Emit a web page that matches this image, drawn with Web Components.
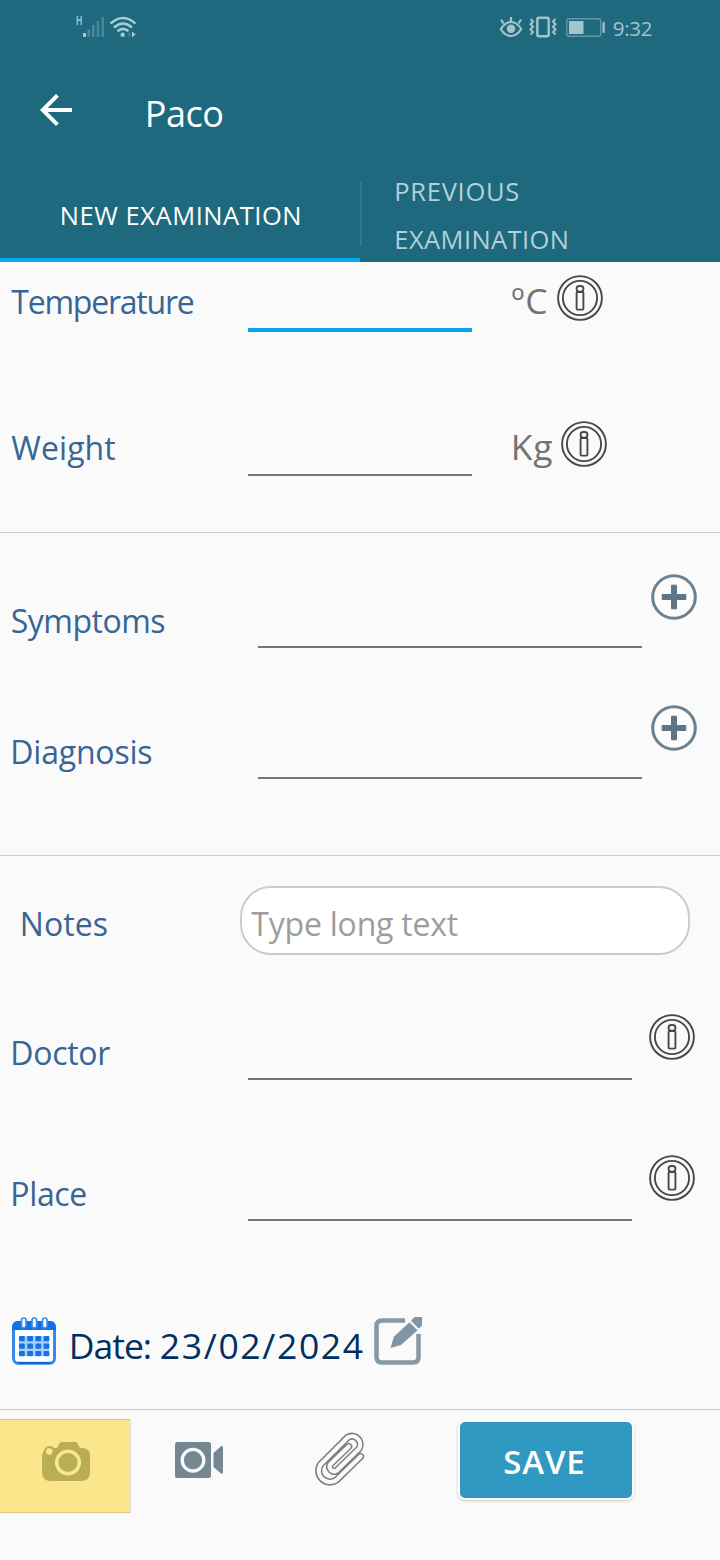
<!DOCTYPE html>
<html lang="en">
<head>
<meta charset="utf-8">
<title>Paco</title>
<style>
html,body{margin:0;padding:0}
body{width:720px;height:1560px;overflow:hidden;background:#fafafa;font-family:"Open Sans","Noto Sans",sans-serif}
</style>
</head>
<body>
<exam-app></exam-app>
<script>
const define = (name, html, Base = HTMLElement) => customElements.define(name, class extends Base {
  constructor() {
    super();
    const t = document.createElement('template');
    t.innerHTML = html;
    this.attachShadow({ mode: 'open' }).append(t.content.cloneNode(true));
  }
});

/* A single-line label tracked so that its ink spans the width given in "w". */
const pen = document.createElement('canvas').getContext('2d');
class FitText extends HTMLElement {
  connectedCallback() {
    const size = +this.getAttribute('size') || 32;
    const weight = this.getAttribute('weight') || 400;
    const text = this.textContent;
    const root = this.shadowRoot || this.attachShadow({ mode: 'open' });
    root.innerHTML = `<style>:host{display:block;white-space:nowrap;overflow:visible}</style><slot></slot>`;
    pen.font = `${weight} ${size}px "Open Sans","Noto Sans",sans-serif`;
    const m = pen.measureText(text);
    const w = +this.getAttribute('w');
    const ls = (w - 1 - m.actualBoundingBoxLeft - m.actualBoundingBoxRight) / Math.max(1, text.length - 1);
    this.style.cssText += `;font-size:${size}px;font-weight:${weight};letter-spacing:${ls.toFixed(3)}px;width:${w}px;text-indent:${(m.actualBoundingBoxLeft + .8).toFixed(2)}px`;
  }
}
customElements.define('fit-text', FitText);

define('info-icon', `<style>:host{display:block;width:46px;height:46px}svg{display:block}</style>
<svg width="46" height="46" viewBox="0 0 46 46" fill="none" stroke="#484848" stroke-width="1.9">
<circle cx="23" cy="23" r="21.900"/><circle cx="23" cy="23" r="17.100"/>
<rect x="19.600" y="11" width="6.800" height="5.700" rx="2.600"/><rect x="19.600" y="17" width="6.800" height="17.600" rx="1"/></svg>`);

define('add-icon', `<style>:host{display:block;width:46px;height:46px}svg{display:block}</style>
<svg width="46" height="46" viewBox="0 0 46 46"><circle cx="23" cy="23" r="21.300" fill="#fcfcfc" stroke="#6b8190" stroke-width="3"/>
<path d="M20.500 11.200h5v9.300h9.300v5h-9.300v9.300h-5v-9.300h-9.300v-5h9.300z" fill="#5f7585" stroke="#5f7585" stroke-width="1" stroke-linejoin="round"/></svg>`);

define('status-bar', `<style>
:host{display:flex;height:56px;box-sizing:border-box;padding:0 0 0 76px;color:#a5c3cb}
svg{display:block;flex:none}
.h{font:700 12.500px/12px "Liberation Sans",sans-serif;width:6px;margin-top:15px;transform:scaleX(.7);transform-origin:0 0}
fit-text{line-height:30px;margin-top:13px}
</style>
<span class="h">H</span>
<svg width="56" height="56" viewBox="82 0 56 56"><g fill="#4a8797"><path d="M87.500 29.500h2.600v7.500h-2.600zM92 25h2.600v12H92zM96.700 21h2.600v16h-2.600zM101.400 17h2.600v20h-2.600z"/></g><rect x="83" y="33" width="3" height="4" rx=".7" fill="#a5cdd4"/>
<g fill="none" stroke="#a5cdd4" stroke-width="2.500"><path d="M110.500 23.700q12.500-11.500 25 0M114 27.500q9-8 18 0M117.500 31.300q5.500-4.800 11 0"/></g><circle cx="122.700" cy="34.700" r="2.200" fill="#a5cdd4"/><path d="M130.300 32v5l-3.300-2.500z" fill="#4a8797"/><path d="M132 31.500l3.600 3-3.600 3z" fill="#a5cdd4"/></svg>
<svg width="475" height="56" viewBox="138 0 475 56" fill="none" stroke="#a5c3cb" stroke-width="2.200"><path d="M500.800 29q4.200-7 10.200-7t10.200 7q-4.200 7-10.200 7t-10.200-7z"/><circle cx="511" cy="28.800" r="4.300" fill="#a5c3cb" stroke="none"/><path d="M511 17v4.500M501 19.500l2.500 4M521 19.500l-2.500 4"/>
<rect x="537.300" y="17.700" width="11.400" height="18.600" rx="1.500" stroke-width="2.400"/><path d="M530.500 19l2.500 2.500-2.500 2.700 2.500 2.600-2.500 2.700 2.500 2.500-2.500 2.500M555.500 19l-2.500 2.500 2.500 2.700-2.500 2.600 2.500 2.700-2.500 2.500 2.500 2.500" stroke-width="2"/>
<rect x="566.700" y="18.700" width="34" height="17.600" rx="2.500" stroke="#5f99a8" stroke-width="1.400"/><rect x="569" y="21" width="14.500" height="13" fill="#a5c3cb" stroke="none"/><rect x="602.500" y="22" width="2.300" height="11" rx="1" fill="#a5c3cb" stroke="none"/></svg>
<fit-text size="20.500" w="39">9:32</fit-text>`);

define('app-bar', `<style>
:host{display:flex;height:110px;padding-left:32px}
svg{display:block;margin-top:30px;flex:none}
::slotted(*){margin:34px 0 0 67px;line-height:48px;color:#fff}
</style><svg width="48" height="48" viewBox="0 0 24 24" fill="#fff"><path d="M20 11H7.830l5.590-5.590L12 4l-8 8 8 8 1.410-1.410L7.830 13H20z"/></svg><slot></slot>`);

define('exam-tabs', `<style>
:host{display:grid;grid-template-columns:1fr 1fr;height:96px;line-height:48px}
.a,.b{box-sizing:border-box;height:96px}
.a{padding:25px 0 0 61px;color:#fff;border-bottom:4px solid #08a6f1}
.b{display:flex;color:#b2d0d8}
i{width:2px;height:64px;margin-top:16px;background:#34788a}
.t{padding:1px 0 0 33.500px}
</style><div class="a"><fit-text size="25.500" w="238.500">NEW EXAMINATION</fit-text></div>
<div class="b"><i></i><div class="t"><fit-text size="25.500" w="123">PREVIOUS</fit-text><fit-text size="25.500" w="171.500">EXAMINATION</fit-text></div></div>`);

/* Label on the left, underlined field in the middle, unit or action at the end. */
define('field-row', `<style>
:host{display:flex;align-items:flex-start;height:var(--h);box-sizing:border-box}
.label{width:var(--fx,248px);flex:none;box-sizing:border-box;padding:var(--ly) 0 0 var(--lx,12.500px);color:#376696;line-height:40px}
.field{width:var(--fw);flex:none;box-sizing:border-box;height:var(--uy);border-bottom:var(--bar,2px solid #757575)}
.end{display:flex;padding:var(--ey) 0 0 var(--ex);color:#737373;line-height:40px}
</style><div class="label"><slot name="label"></slot></div><div class="field"></div><div class="end"><slot></slot></div>`);

define('notes-row', `<style>
:host{display:flex;height:128px;color:#376696;line-height:40px}
.l{width:240px;box-sizing:border-box;padding:48px 0 0 22px}
.box{width:450px;height:69px;margin-top:30px;box-sizing:border-box;border:2px solid #ccc;border-radius:31px;background:#fff;color:#9d9d9d;padding:16px 0 0 8.500px}
</style><div class="l"><slot name="label"></slot></div><div class="box"><slot></slot></div>`);

define('date-row', `<style>
:host{display:flex;height:124px;padding:32px 0 0 10px;box-sizing:border-box;color:#003061}
svg{display:block;flex:none}fit-text{margin-top:10px;height:36px;line-height:36px}
</style>
<svg width="48" height="48" viewBox="0 0 48 48"><rect x="3.500" y="6" width="41" height="40.300" rx="5" fill="#fff" stroke="#3787ee" stroke-width="3"/><path d="M2 13V10q0-4 4-6h36q4 2 4 6v3z" fill="#0f70eb"/><g fill="#fafafa" stroke="#3d8bea" stroke-width="1.700"><rect x="11.500" y="1" width="4.600" height="10" rx="2.300"/><rect x="22" y="1" width="4.600" height="10" rx="2.300"/><rect x="32.500" y="1" width="4.600" height="10" rx="2.300"/></g><path d="M8 46h32" stroke="#1467c9" stroke-width="2"/>
<path d="M9 19h30v20H9z" fill="#a9cdf7"/>
<g fill="#1673e5"><rect x="9" y="19" width="5.800" height="5.300" rx="1"/><rect x="17.200" y="19" width="5.800" height="5.300" rx="1"/><rect x="25.400" y="19" width="5.800" height="5.300" rx="1"/><rect x="33.600" y="19" width="5.800" height="5.300" rx="1"/><rect x="9" y="26.500" width="5.800" height="5.300" rx="1"/><rect x="17.200" y="26.500" width="5.800" height="5.300" rx="1"/><rect x="25.400" y="26.500" width="5.800" height="5.300" rx="1"/><rect x="33.600" y="26.500" width="5.800" height="5.300" rx="1"/><rect x="9" y="34" width="5.800" height="5.300" rx="1"/><rect x="17.200" y="34" width="5.800" height="5.300" rx="1"/><rect x="25.400" y="34" width="5.800" height="5.300" rx="1"/><rect x="33.600" y="34" width="5.800" height="5.300" rx="1"/></g></svg>
<fit-text size="35.500" w="79" style="margin-left:13px">Date:</fit-text>
<fit-text size="35.500" w="203" style="margin-left:10px">23/02/2024</fit-text>
<svg style="margin-left:11px" width="48" height="48" viewBox="0 0 48 48"><path d="M31 3.500H8Q2.500 3.500 2.500 9v31q0 5.500 5.500 5.500h31q5.500 0 5.500-5.500V17" fill="none" stroke="#8598a6" stroke-width="4.500"/><path d="M16.500 31l3.300-11.200L35.500 5.200l8 8L27 28z" fill="#8295a4"/><path d="M37 3.700L40.500 0H48v8.300l-3.200 3.500z" fill="#8295a4"/></svg>`);

define('action-bar', `<style>
:host{display:flex;align-items:flex-start;height:150px;box-sizing:border-box;padding-top:9px}
svg{display:block;flex:none}
.cam{width:130px;height:94px;box-sizing:border-box;padding:22px 0 0 42px;background:#fce68b;border-top:1px solid #d8c98a;border-bottom:1px solid #dccd88;box-shadow:1px 0 1px #bbb6}
.vid{margin:23px 0 0 45px}.clip{margin:12px 0 0 91px}
button{display:block;width:176px;height:80px;box-sizing:border-box;margin:1px 0 0 90px;border:2px solid #fff;border-radius:7px;background:#2f99c1;box-shadow:0 1px 3px #0003;color:#fff;font-family:inherit;line-height:48px;padding:4px 0 0 43.500px;text-align:left}
</style>
<div class="cam"><svg width="48" height="40" viewBox="0 0 48 40"><path d="M14.500 6Q16 5 16.700 2.500 17.500 0 20 0h13q2.500 0 3.300 3 .7 3 3.700 3 8 0 8 8v16q0 9-9 9H9q-9 0-9-9V13l2-5q2-4 5.500-4T12 6z" fill="#b9ae55"/><circle cx="7.300" cy="9.500" r="3.200" fill="#fce68b"/><circle cx="26" cy="20.500" r="11.300" fill="#b9ae55" stroke="#fce68b" stroke-width="3.500"/></svg></div>
<svg class="vid" width="48" height="36" viewBox="0 0 48 36"><rect width="36" height="36" rx="2.500" fill="#758792"/><circle cx="18" cy="18.200" r="10.800" fill="#758792" stroke="#fafafa" stroke-width="3.300"/><path d="M38.500 11L46 4.200Q48 3 48 5.500v24q0 3-2 2L38.500 25z" fill="#758792"/></svg>
<svg class="clip" width="54" height="58" viewBox="0 0 54 58" fill="none" stroke-linecap="round" stroke-linejoin="round"><g transform="translate(-1.600 -1.300) scale(1.030)"><path d="M46.800 26L23.300 48.900A11 11 0 0 1 8.100 33.500L34.200 7.500A8 8 0 0 1 45.200 18.500L23.600 39.700A4.500 4.500 0 0 1 17.400 33.500L35.300 16.300" stroke="#808080" stroke-width="7"/><path d="M46.800 26L23.300 48.900A11 11 0 0 1 8.100 33.500L34.200 7.500A8 8 0 0 1 45.200 18.500L23.600 39.700A4.500 4.500 0 0 1 17.400 33.500L35.300 16.300" stroke="#fafafa" stroke-width="4"/></g></svg>
<button><fit-text size="33" weight="600" w="80">SAVE</fit-text></button>`);

define('exam-app', `<style>
:host{display:block;width:720px;height:1560px;background:#fafafa}
header{background:#1e697d;height:262px}
hr{height:1px;border:0;margin:0;background:#c9cccb}
</style>
<header><status-bar></status-bar><app-bar><fit-text size="36" w="75.500">Paco</fit-text></app-bar><exam-tabs></exam-tabs></header>
<field-row style="--h:146px;--ly:20px;--lx:10.500px;--fw:224px;--uy:70px;--bar:4px solid #08a6f1;--ey:13px;--ex:39.500px"><fit-text slot="label" w="183.500">Temperature</fit-text><fit-text style="margin-top:5px" size="35.500" w="36">ºC</fit-text><info-icon style="margin-left:9.500px"></info-icon></field-row>
<field-row style="--h:124px;--ly:20px;--lx:10.500px;--fw:224px;--uy:68px;--ey:13px;--ex:41px"><fit-text slot="label" w="105">Weight</fit-text><fit-text style="margin-top:5px" size="35.500" w="39.500">Kg</fit-text><info-icon style="margin-left:8.500px"></info-icon></field-row>
<hr>
<field-row style="--h:131px;--ly:68px;--lx:11px;--fx:258px;--fw:384px;--uy:115px;--ey:41px;--ex:9px"><fit-text slot="label" w="153.500">Symptoms</fit-text><add-icon></add-icon></field-row>
<field-row style="--h:191px;--ly:68px;--fx:258px;--fw:384px;--uy:115px;--ey:41px;--ex:9px"><fit-text slot="label" w="139">Diagnosis</fit-text><add-icon></add-icon></field-row>
<hr>
<notes-row><fit-text slot="label" w="85">Notes</fit-text><fit-text w="207.500">Type long text</fit-text></notes-row>
<field-row style="--h:141px;--ly:49px;--fw:384px;--uy:96px;--ey:30px;--ex:17px"><fit-text slot="label" w="98">Doctor</fit-text><info-icon></info-icon></field-row>
<field-row style="--h:160px;--ly:49px;--fw:384px;--uy:96px;--ey:30px;--ex:17px"><fit-text slot="label" w="74">Place</fit-text><info-icon></info-icon></field-row>
<date-row></date-row>
<hr>
<action-bar></action-bar>`);
</script>
</body>
</html>
